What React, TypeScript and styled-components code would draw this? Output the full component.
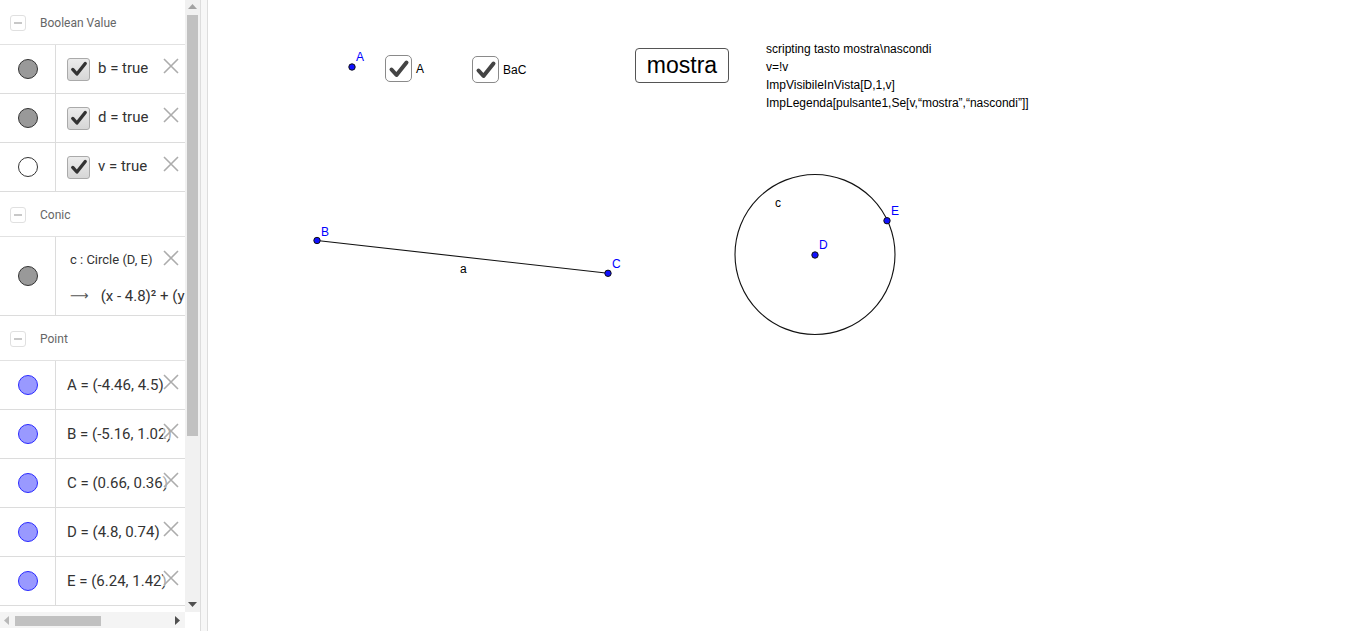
import React from "react";
import styled, { createGlobalStyle } from "styled-components";

const Global = createGlobalStyle`
  html, body { margin: 0; padding: 0; width: 1366px; height: 631px; overflow: hidden; background: #fff; }
  * { box-sizing: border-box; }
`;

const Page = styled.div`
  display: flex;
  width: 1366px;
  height: 631px;
  font-family: Roboto, "Open Sans", sans-serif;
`;

const LeftPanel = styled.div`
  display: grid;
  grid-template-columns: 185px 15px;
  grid-template-rows: 612px 16px 3px;
  width: 200px;
  height: 631px;
  background: #fff;
`;

const List = styled.div`
  overflow: hidden;
  position: relative;
`;

const GroupHeader = styled.div`
  display: flex;
  align-items: center;
  gap: 14px;
  height: 45px;
  padding: 2px 0 0 10px;
  border-bottom: 1px solid #e2e2e2;
  color: #666;
  font-size: 12px;
`;

const Collapse = styled.span`
  width: 16px;
  height: 16px;
  border: 1px solid #e0e0e0;
  border-radius: 3px;
  display: flex;
  align-items: center;
  justify-content: center;
  &::after {
    content: "";
    width: 8px;
    height: 1.5px;
    background: #c8c8c8;
  }
`;

const Row = styled.div<{ $h?: number }>`
  position: relative;
  display: grid;
  grid-template-columns: 56px 1fr;
  height: ${(p) => p.$h ?? 49}px;
  border-bottom: 1px solid #dcdcdc;
`;

const MarbleCell = styled.div`
  display: flex;
  align-items: center;
  justify-content: center;
  border-right: 1px solid #dcdcdc;
`;

const Marble = styled.span<{ $fill: string; $stroke: string }>`
  width: 20px;
  height: 20px;
  border-radius: 50%;
  background: ${(p) => p.$fill};
  border: 1px solid ${(p) => p.$stroke};
`;

const Content = styled.div`
  display: flex;
  align-items: center;
  gap: 8px;
  padding-left: 11px;
  white-space: nowrap;
  overflow: hidden;
  color: #333;
  font-size: 15px;
`;

const Label = styled.span<{ $lift?: number }>`
  margin-bottom: ${(p) => p.$lift ?? 0}px;
`;

const ConicContent = styled.div`
  display: flex;
  flex-direction: column;
  padding: 14px 0 0 14px;
  white-space: nowrap;
  overflow: hidden;
  color: #333;
`;

const Definition = styled.div`
  font-size: 13px;
  line-height: 18px;
`;

const Value = styled.div`
  display: flex;
  align-items: center;
  gap: 12px;
  margin-top: 17px;
  font-size: 15px;
  line-height: 20px;
`;

const Arrow = styled.span`
  font-family: "DejaVu Sans", sans-serif;
  font-size: 13px;
  color: #555;
`;

const PanelCheck = styled.span`
  width: 23px;
  height: 23px;
  flex: none;
  border: 1px solid #aaa;
  border-radius: 3px;
  background: linear-gradient(#ececec, #d6d6d6);
  display: flex;
  align-items: center;
  justify-content: center;
`;

const Delete = styled.span`
  position: absolute;
  right: 6px;
  top: 13px;
  width: 16px;
  height: 16px;
  display: flex;
  background: rgba(255, 255, 255, 0.55);
`;

const VTrack = styled.div`
  position: relative;
  background: #f1f1f1;
`;

const VThumb = styled.div`
  position: absolute;
  left: 2px;
  right: 2px;
  top: 15px;
  height: 421px;
  background: #c1c1c1;
`;

const ArrowIcon = styled.svg<{ $x: number; $y: number }>`
  position: absolute;
  left: ${(p) => p.$x}px;
  top: ${(p) => p.$y}px;
`;

const HTrack = styled.div`
  position: relative;
  background: #f4f4f4;
`;

const HThumb = styled.div`
  position: absolute;
  left: 15px;
  width: 86px;
  top: 4px;
  height: 10px;
  background: #c1c1c1;
`;

const Splitter = styled.div`
  width: 8px;
  height: 631px;
  border-left: 1px solid #dddddd;
  border-right: 1px solid #dddddd;
  background: #f7f7f7;
`;

const Canvas = styled.div`
  position: relative;
  flex: 1;
  height: 631px;
  background: #fff;
  font-family: "Liberation Sans", Arial, sans-serif;
`;

const Drawing = styled.svg`
  display: block;
  width: 100%;
  height: 100%;
`;

const CheckWidget = styled.div<{ $x: number; $y: number }>`
  position: absolute;
  left: ${(p) => p.$x}px;
  top: ${(p) => p.$y}px;
  display: flex;
  align-items: center;
  gap: 4px;
  font-size: 12px;
  color: #000;
`;

const CanvasCheck = styled.span`
  width: 27px;
  height: 27px;
  border: 1.5px solid #8a8a8a;
  border-radius: 5px;
  background: #fff;
  display: flex;
  align-items: center;
  justify-content: center;
`;

const Button = styled.div`
  position: absolute;
  left: 427px;
  top: 48px;
  width: 94px;
  height: 35px;
  border: 1px solid #555;
  border-radius: 4px;
  display: flex;
  align-items: center;
  justify-content: center;
  font-size: 23px;
  color: #000;
  background: #fff;
`;

const Script = styled.div`
  position: absolute;
  left: 558px;
  top: 40px;
  font-size: 12px;
  line-height: 18px;
  color: #000;
  white-space: pre;
`;

const Check = ({ size, color, w = 3.6 }: { size: number; color: string; w?: number }) => (
  <svg width={size} height={size} viewBox="0 0 24 24">
    <path d="M4.5 12.5 L9.5 18 L19.5 5.5" fill="none" stroke={color} strokeWidth={w} strokeLinecap="round" strokeLinejoin="round" />
  </svg>
);

const Cross = () => (
  <svg width={16} height={16} viewBox="0 0 16 16">
    <path d="M1 1 L15 15 M15 1 L1 15" stroke="#acacac" strokeWidth={1.6} />
  </svg>
);

const booleans = [
  { name: "b", fill: "#999", stroke: "#333" },
  { name: "d", fill: "#999", stroke: "#333" },
  { name: "v", fill: "#fff", stroke: "#333" },
];

const points = [
  "A = (-4.46, 4.5)",
  "B = (-5.16, 1.02)",
  "C = (0.66, 0.36)",
  "D = (4.8, 0.74)",
  "E = (6.24, 1.42)",
];

const Dot = ({ x, y }: { x: number; y: number }) => (
  <circle cx={x} cy={y} r={3.2} fill="#1010ff" stroke="#111" strokeWidth={1} />
);

export default function App() {
  return (
    <>
      <Global />
      <Page>
        <LeftPanel>
          <List>
            <GroupHeader>
              <Collapse />
              Boolean Value
            </GroupHeader>
            {booleans.map((b) => (
              <Row key={b.name}>
                <MarbleCell>
                  <Marble $fill={b.fill} $stroke={b.stroke} />
                </MarbleCell>
                <Content>
                  <PanelCheck>
                    <Check size={20} color="#333" w={4} />
                  </PanelCheck>
                  <Label $lift={3}>{b.name} = true</Label>
                </Content>
                <Delete>
                  <Cross />
                </Delete>
              </Row>
            ))}
            <GroupHeader>
              <Collapse />
              Conic
            </GroupHeader>
            <Row $h={79}>
              <MarbleCell>
                <Marble $fill="#999" $stroke="#333" />
              </MarbleCell>
              <ConicContent>
                <Definition>c : Circle (D, E)</Definition>
                <Value>
                  <Arrow>⟶</Arrow>
                  (x - 4.8)² + (y - 0.74)² = 2.54
                </Value>
              </ConicContent>
              <Delete>
                <Cross />
              </Delete>
            </Row>
            <GroupHeader>
              <Collapse />
              Point
            </GroupHeader>
            {points.map((p) => (
              <Row key={p}>
                <MarbleCell>
                  <Marble $fill="#9999ff" $stroke="#2a2aff" />
                </MarbleCell>
                <Content>
                  <Label $lift={1}>{p}</Label>
                </Content>
                <Delete>
                  <Cross />
                </Delete>
              </Row>
            ))}
          </List>
          <VTrack>
            <ArrowIcon $x={3} $y={4} width={9} height={6} viewBox="0 0 9 6">
              <path d="M0 5 L4.5 0 L9 5 Z" fill="#a3a3a3" />
            </ArrowIcon>
            <VThumb />
            <ArrowIcon $x={3} $y={602} width={9} height={6} viewBox="0 0 9 6">
              <path d="M0 0 L9 0 L4.5 5 Z" fill="#505050" />
            </ArrowIcon>
          </VTrack>
          <HTrack>
            <ArrowIcon $x={4} $y={4} width={6} height={9} viewBox="0 0 6 9">
              <path d="M5 0 L0 4.5 L5 9 Z" fill="#b8b8b8" />
            </ArrowIcon>
            <HThumb />
            <ArrowIcon $x={175} $y={4} width={6} height={9} viewBox="0 0 6 9">
              <path d="M0 0 L5 4.5 L0 9 Z" fill="#505050" />
            </ArrowIcon>
          </HTrack>
        </LeftPanel>
        <Splitter />
        <Canvas>
          <Drawing viewBox="0 0 1158 631">
            <line x1={109} y1={240.5} x2={400} y2={273.3} stroke="#111" strokeWidth={1.1} />
            <circle cx={607} cy={254.5} r={80} fill="none" stroke="#111" strokeWidth={1.1} />
            <Dot x={144} y={67} />
            <Dot x={109} y={240.5} />
            <Dot x={400} y={273.3} />
            <Dot x={607} y={255} />
            <Dot x={679} y={220.7} />
            <g fontFamily="Liberation Sans, Arial, sans-serif" fontSize={12} fill="#0000ff">
              <text x={148} y={61}>A</text>
              <text x={113} y={236}>B</text>
              <text x={404} y={268}>C</text>
              <text x={611} y={249}>D</text>
              <text x={683} y={215}>E</text>
            </g>
            <g fontFamily="Liberation Sans, Arial, sans-serif" fontSize={12} fill="#000">
              <text x={252} y={273}>a</text>
              <text x={567} y={207}>c</text>
            </g>
          </Drawing>
          <CheckWidget $x={177} $y={55}>
            <CanvasCheck>
              <Check size={24} color="#444" w={4} />
            </CanvasCheck>
            A
          </CheckWidget>
          <CheckWidget $x={264} $y={56}>
            <CanvasCheck>
              <Check size={24} color="#444" w={4} />
            </CanvasCheck>
            BaC
          </CheckWidget>
          <Button>mostra</Button>
          <Script>
            {"scripting tasto mostra\\nascondi\nv=!v\nImpVisibileInVista[D,1,v]\nImpLegenda[pulsante1,Se[v,“mostra”,“nascondi”]]"}
          </Script>
        </Canvas>
      </Page>
    </>
  );
}
